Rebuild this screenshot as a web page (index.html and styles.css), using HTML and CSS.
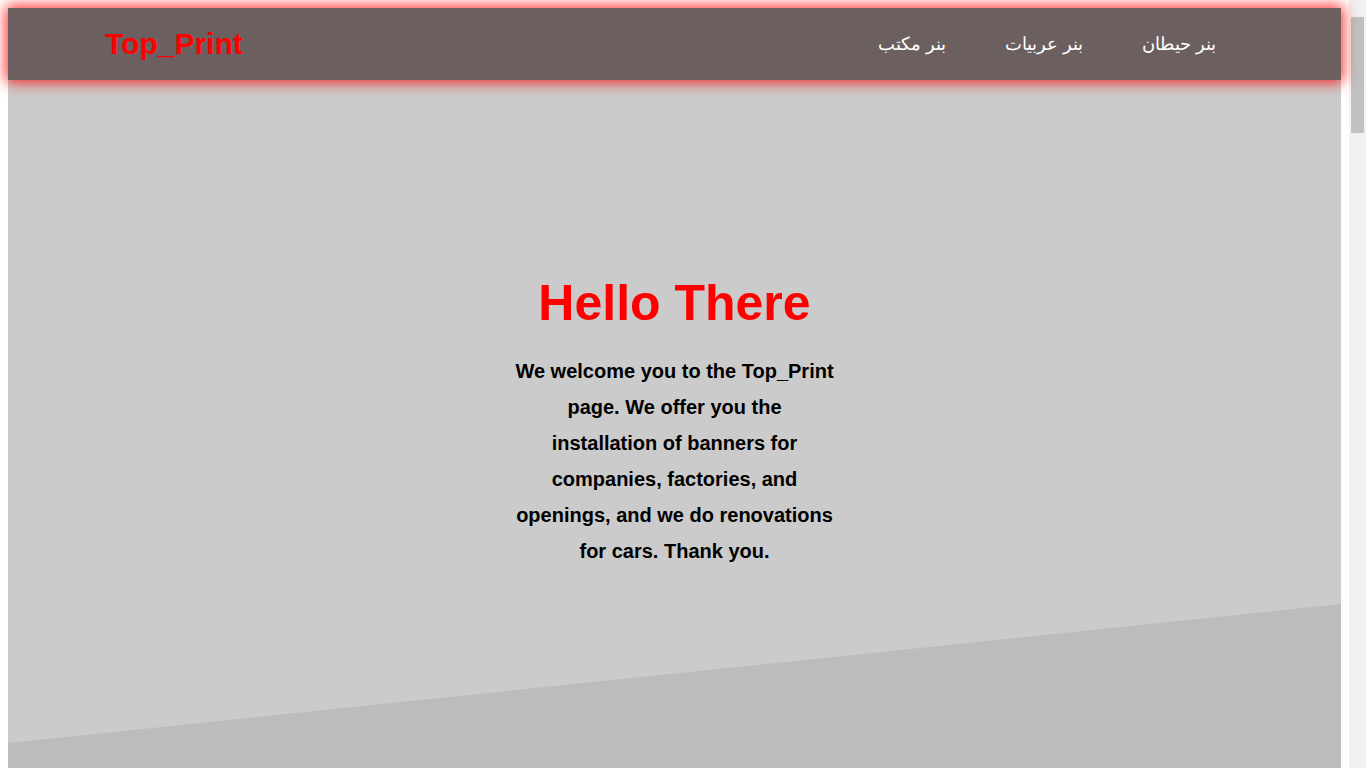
FILE: index.html
```html
<!DOCTYPE html>
<html lang="en">
<head>
<meta charset="utf-8">
<title>Top_Print</title>
<link rel="stylesheet" href="styles.css">
</head>
<body>
<div class="page">
  <header class="site-header">
    <a class="logo" href="#">Top_Print</a>
    <nav class="main-nav" dir="rtl">
      <a href="#">بنر حيطان</a>
      <a href="#">بنر عربيات</a>
      <a href="#">بنر مكتب</a>
    </nav>
  </header>
  <section class="hero">
    <h1 class="hero-title">Hello There</h1>
    <p class="hero-text">We welcome you to the Top_Print page. We offer you the installation of banners for companies, factories, and openings, and we do renovations for cars. Thank you.</p>
  </section>
  <section class="below"></section>
</div>
</body>
</html>
```

FILE: styles.css
```css
html {
  background:
    linear-gradient(#c1c1c1, #c1c1c1) right 2px top 17px / 13px 116px no-repeat,
    linear-gradient(#f1f1f1, #f1f1f1) right top / 17px 100% no-repeat,
    #ffffff;
}

body {
  margin: 0;
  font-family: "Liberation Sans", Arial, sans-serif;
}

.page {
  padding: 8px 25px 8px 8px;
}

.site-header {
  position: relative;
  z-index: 2;
  height: 72px;
  background: #6b605f;
  box-shadow: 0 0 14px 2px rgba(255, 0, 0, 0.85);
  display: flex;
  align-items: center;
  justify-content: space-between;
  padding: 0 125px 0 97px;
}

.logo {
  color: #ff0000;
  font-weight: bold;
  font-size: 30px;
  text-decoration: none;
  margin-top: -1px;
}

.main-nav {
  display: flex;
  gap: 59px;
}

.main-nav a {
  color: #ffffff;
  text-decoration: none;
  font-size: 18px;
}

.hero {
  position: relative;
  height: 800px;
  background: #cbcbcb;
  display: flex;
  flex-direction: column;
  align-items: center;
  padding-top: 198px;
  box-sizing: border-box;
  overflow: hidden;
}

.hero::after {
  content: "";
  position: absolute;
  inset: 0;
  background: #bcbcbc;
  clip-path: polygon(0 663px, 100% 524px, 100% 100%, 0 100%);
}

.hero-title {
  position: relative;
  z-index: 1;
  margin: 0;
  color: #ff0000;
  font-size: 50px;
  line-height: 50px;
  font-weight: bold;
}

.hero-text {
  position: relative;
  z-index: 1;
  margin: 25px 0 0;
  width: 320px;
  text-align: center;
  font-weight: bold;
  font-size: 20px;
  line-height: 36px;
  color: #000000;
}

.below {
  height: 3970px;
  background: #bcbcbc;
}
```
